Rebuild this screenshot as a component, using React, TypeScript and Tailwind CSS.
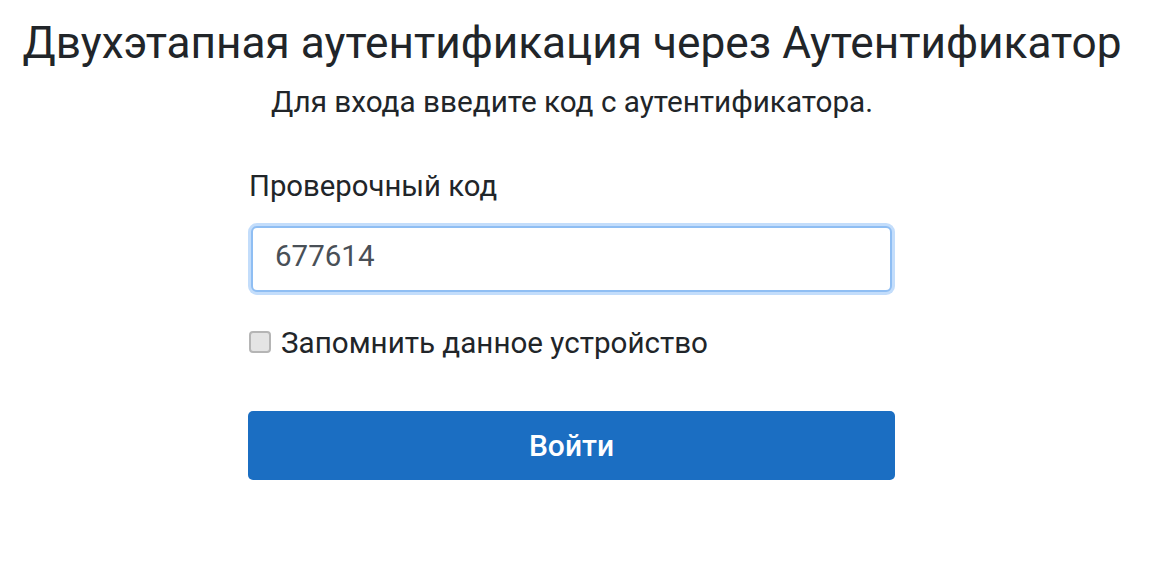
import React, { useState } from "react";

export default function App() {
  const [code, setCode] = useState("677614");
  const [remember, setRemember] = useState(false);

  return (
    <div className="w-[1144px] min-h-[572px] bg-white font-['Roboto',sans-serif] text-[#212529]">
      <h1 className="pt-[17px] text-center text-[44.2px] leading-[52px] font-normal">
        Двухэтапная аутентификация через Аутентификатор
      </h1>
      <p className="mt-[16px] text-center text-[29.7px] leading-[34px]">
        Для входа введите код с аутентификатора.
      </p>

      <form className="ml-[248px] mt-[50px] w-[647px]" onSubmit={(e) => e.preventDefault()}>
        <label className="block pl-[1px] text-[29.3px] leading-[34px]">Проверочный код</label>
        <div className="mt-[20px] rounded-[9px] bg-[#c3ddfb] p-[3px]">
          <input
            value={code}
            onChange={(e) => setCode(e.target.value)}
            className="block h-[66px] w-full rounded-[6px] border-2 border-[#8fbef3] bg-white px-[22px] pb-[6px] text-[29.5px] text-[#495057] outline-none"
          />
        </div>

        <label className="mt-[31px] flex items-center gap-[10px] text-[29.6px] leading-[34px]">
          <input
            type="checkbox"
            checked={remember}
            onChange={(e) => setRemember(e.target.checked)}
            className="ml-[1px] mb-[2px] h-[22px] w-[22px] appearance-none rounded-[4px] border-2 border-[#b5b5b5] bg-[#e4e4e4] checked:bg-[#1b6ec2]"
          />
          Запомнить данное устройство
        </label>

        <button
          type="submit"
          className="mt-[51px] h-[69px] w-full rounded-[5px] bg-[#1b6ec2] text-[30px] font-medium text-white"
        >
          Войти
        </button>
      </form>
    </div>
  );
}
